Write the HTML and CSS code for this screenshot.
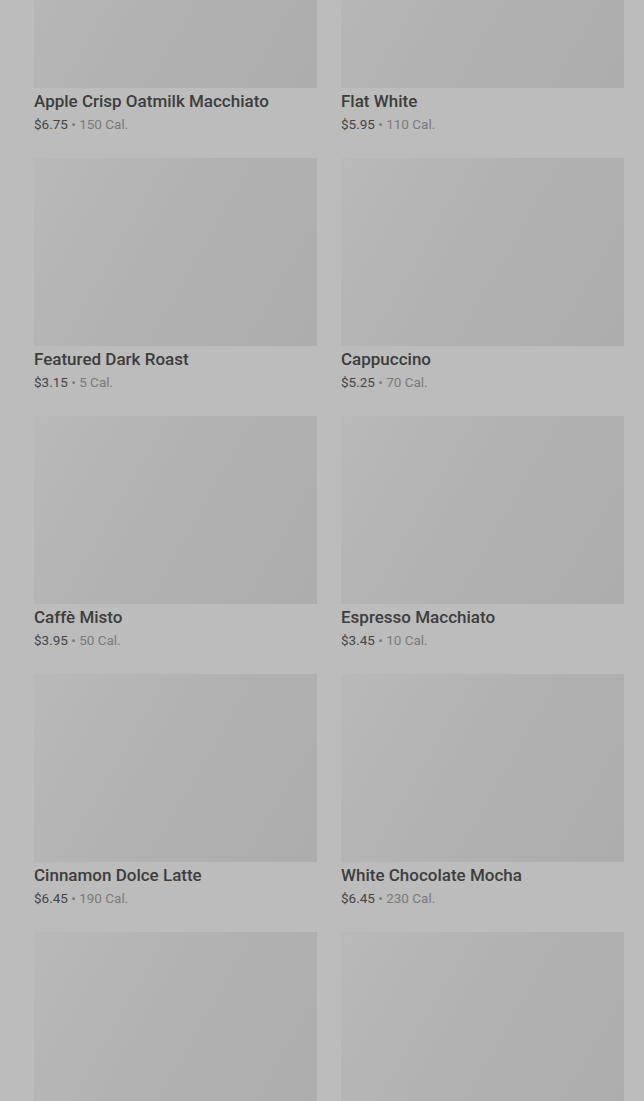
FILE: index.html
```html
<!DOCTYPE html>
<html lang="en">
  <head>
    <meta charset="UTF-8" />
    <meta name="viewport" content="width=device-width, initial-scale=1.0" />
    <title>Menu</title>
    <link rel="stylesheet" href="styles.css">
  </head>
  <body>
    <div class="menu-grid">
      <div class="card">
        <div class="thumb"></div>
        <div class="name">Apple Crisp Oatmilk Macchiato</div>
        <div class="meta"><span class="price">$6.75</span> • 150 Cal.</div>
      </div>
      <div class="card">
        <div class="thumb"></div>
        <div class="name">Flat White</div>
        <div class="meta"><span class="price">$5.95</span> • 110 Cal.</div>
      </div>
      <div class="card">
        <div class="thumb"></div>
        <div class="name">Featured Dark Roast</div>
        <div class="meta"><span class="price">$3.15</span> • 5 Cal.</div>
      </div>
      <div class="card">
        <div class="thumb"></div>
        <div class="name">Cappuccino</div>
        <div class="meta"><span class="price">$5.25</span> • 70 Cal.</div>
      </div>
      <div class="card">
        <div class="thumb"></div>
        <div class="name">Caffè Misto</div>
        <div class="meta"><span class="price">$3.95</span> • 50 Cal.</div>
      </div>
      <div class="card">
        <div class="thumb"></div>
        <div class="name">Espresso Macchiato</div>
        <div class="meta"><span class="price">$3.45</span> • 10 Cal.</div>
      </div>
      <div class="card">
        <div class="thumb"></div>
        <div class="name">Cinnamon Dolce Latte</div>
        <div class="meta"><span class="price">$6.45</span> • 190 Cal.</div>
      </div>
      <div class="card">
        <div class="thumb"></div>
        <div class="name">White Chocolate Mocha</div>
        <div class="meta"><span class="price">$6.45</span> • 230 Cal.</div>
      </div>
      <div class="card">
        <div class="thumb"></div>
      </div>
      <div class="card">
        <div class="thumb"></div>
      </div>
    </div>
  </body>
</html>
```
FILE: styles.css
```css
html,
body {
  height: 100%;
  overflow: hidden;
}
body {
  margin: 0;
  background-color: #bcbcbc;
  font-family: Roboto, "Liberation Sans", sans-serif;
  color: #3b3b3b;
}
.menu-grid {
  display: grid;
  grid-template-columns: 283px 283px;
  column-gap: 24px;
  row-gap: 24px;
  padding: 0 20px 0 34px;
  margin-top: -100px;
}
.card {
  display: flex;
  flex-direction: column;
}
.thumb {
  height: 188px;
  background: linear-gradient(120deg, #b9b9b9 0%, #b1b1b1 50%, #adadad 100%);
}
.name {
  margin-top: 2px;
  font-size: 17px;
  font-weight: 500;
  line-height: 22px;
  color: #3d3d3d;
}
.meta {
  margin-top: 2px;
  font-size: 13.5px;
  line-height: 20px;
  color: #7a7a7a;
}
.price {
  color: #454545;
}
```
